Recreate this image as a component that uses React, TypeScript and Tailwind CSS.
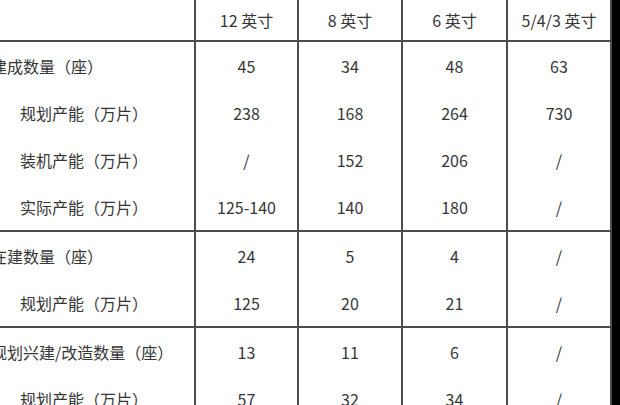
const cols = ["12 英寸", "8 英寸", "6 英寸", "5/4/3 英寸"];

type Row = { label: string; sub?: boolean; values: string[] };

const groups: Row[][] = [
  [
    { label: "建成数量（座）", values: ["45", "34", "48", "63"] },
    { label: "规划产能（万片）", sub: true, values: ["238", "168", "264", "730"] },
    { label: "装机产能（万片）", sub: true, values: ["/", "152", "206", "/"] },
    { label: "实际产能（万片）", sub: true, values: ["125-140", "140", "180", "/"] },
  ],
  [
    { label: "在建数量（座）", values: ["24", "5", "4", "/"] },
    { label: "规划产能（万片）", sub: true, values: ["125", "20", "21", "/"] },
  ],
  [
    { label: "规划兴建/改造数量（座）", values: ["13", "11", "6", "/"] },
    { label: "规划产能（万片）", sub: true, values: ["57", "32", "34", "/"] },
  ],
];

const widths = ["w-[103px]", "w-[104px]", "w-[105px]", "w-[106px] border-r-2"];

function Cells({ values }: { values: string[] }) {
  return (
    <>
      {values.map((v, i) => (
        <div
          key={i}
          className={`${widths[i]} shrink-0 border-l-2 border-[#4d4d4d] flex items-center justify-center`}
        >
          {v}
        </div>
      ))}
    </>
  );
}

export default function App() {
  return (
    <div
      className="w-[620px] h-[405px] overflow-hidden bg-white flex text-[16px] text-[#363636]"
      style={{ fontFamily: '"Noto Sans CJK SC", "Noto Sans", sans-serif' }}
    >
      <div className="ml-[-20px] w-[632px] shrink-0 flex flex-col">
        {/* header */}
        <div className="h-[42px] flex border-b-2 border-[#4d4d4d] shrink-0">
          <div className="w-[214px] shrink-0" />
          <Cells values={cols} />
        </div>

        {groups.map((g, gi) => (
          <div key={gi} className="flex flex-col border-b-2 border-[#4d4d4d] shrink-0">
            {g.map((r, ri) => (
              <div key={ri} className="h-[47px] flex shrink-0">
                <div
                  className={`w-[214px] shrink-0 flex items-center whitespace-nowrap ${
                    r.sub ? "pl-[40px]" : "pl-[11px]"
                  }`}
                >
                  {r.label}
                </div>
                <Cells values={r.values} />
              </div>
            ))}
          </div>
        ))}
        <div className="flex-1 flex">
          <div className="w-[214px] shrink-0" />
          <Cells values={["", "", "", ""]} />
        </div>
      </div>
      <div className="w-[8px] shrink-0 bg-black" />
    </div>
  );
}
